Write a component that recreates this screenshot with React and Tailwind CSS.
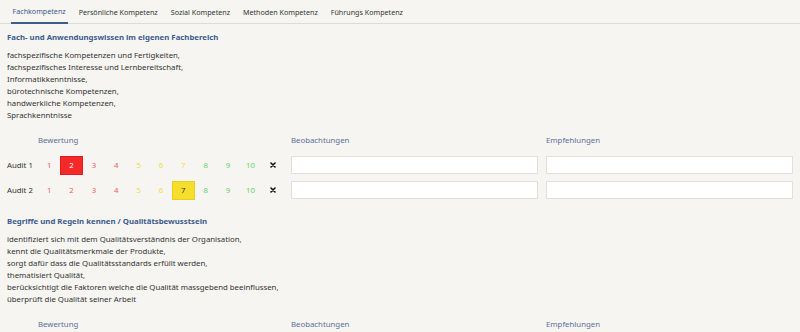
import React from 'react'

const tabs = ['Fachkompetenz', 'Persönliche Kompetenz', 'Sozial Kompetenz', 'Methoden Kompetenz', 'Führungs Kompetenz']

const sections = [
  {
    title: 'Fach- und Anwendungswissen im eigenen Fachbereich',
    lines: [
      'fachspezifische Kompetenzen und Fertigkeiten,',
      'fachspezifisches Interesse und Lernbereitschaft,',
      'Informatikkenntnisse,',
      'bürotechnische Kompetenzen,',
      'handwerkliche Kompetenzen,',
      'Sprachkenntnisse',
    ],
    audits: [2, 7],
  },
  {
    title: 'Begriffe und Regeln kennen / Qualitätsbewusstsein',
    lines: [
      'identifiziert sich mit dem Qualitätsverständnis der Organisation,',
      'kennt die Qualitätsmerkmale der Produkte,',
      'sorgt dafür dass die Qualitätsstandards erfüllt werden,',
      'thematisiert Qualität,',
      'berücksichtigt die Faktoren welche die Qualität massgebend beeinflussen,',
      'überprüft die Qualität seiner Arbeit',
    ],
    audits: [],
  },
]

function numColor(n) {
  if (n <= 4) return 'text-[#f25d5d]'
  if (n <= 7) return 'text-[#f2dc3e]'
  return 'text-[#66d266]'
}

function selectedClass(n) {
  if (n <= 4) return 'bg-[#f42a2a] text-white border border-[#e01c1c]'
  if (n <= 7) return 'bg-[#f6de2c] text-[#333] border border-[#eccf1c]'
  return 'bg-[#4cc44c] text-white'
}

function AuditRow({ label, value }) {
  return (
    <div className="flex items-center h-[18px]">
      <div className="w-[31px] text-[#333]">{label}</div>
      <div className="flex w-[246px] items-center">
        {[1, 2, 3, 4, 5, 6, 7, 8, 9, 10].map(n => (
          <div
            key={n}
            className={`w-[22.4px] h-[19px] flex items-center justify-center ${n === value ? selectedClass(n) : numColor(n)}`}
          >
            {n}
          </div>
        ))}
        <div className="w-[22.4px] flex items-center justify-center">
          <svg width="6" height="6" viewBox="0 0 6 6">
            <path d="M1 1 L5 5 M5 1 L1 5" stroke="#111" strokeWidth="1.6" strokeLinecap="round" />
          </svg>
        </div>
      </div>
      <div className="ml-[7px] flex-1 h-[18px] bg-white border border-[#e2e0db]" />
      <div className="ml-[8px] flex-1 h-[18px] bg-white border border-[#e2e0db]" />
    </div>
  )
}

export default function App() {
  return (
    <div
      className="w-[800px] h-[332px] overflow-hidden bg-[#f6f5f1] text-[7.8px] leading-[12px] text-[#333]"
      style={{ fontFamily: '"Noto Sans", "Open Sans", sans-serif' }}
    >
      {/* Tabs */}
      <div className="flex h-[24px] border-b border-[#dddbd6] pl-[10.5px] gap-[9px] text-[7.15px]">
        {tabs.map((t, i) => (
          <div
            key={t}
            className={`px-[2px] flex items-center h-[24px] ${i === 0 ? 'text-[#3c5b8e] border-b-2 border-[#3c5b8e]' : 'text-[#333]'}`}
          >
            {t}
          </div>
        ))}
      </div>

      <div className="px-[7px]">
        {sections.map((s, si) => (
          <div key={si} className={si === 0 ? 'pt-[7px]' : 'pt-[16px]'}>
            <h3 className="font-bold text-[#3c5b8e]">{s.title}</h3>
            <div className="mt-[6px]">
              {s.lines.map(l => (
                <div key={l}>{l}</div>
              ))}
            </div>
            <div className="flex mt-[13px] text-[#5b6f98]">
              <div className="w-[31px]" />
              <div className="w-[246px]">Bewertung</div>
              <div className="ml-[7px] flex-1">Beobachtungen</div>
              <div className="ml-[8px] flex-1">Empfehlungen</div>
            </div>
            {s.audits.length > 0 && (
              <div className="mt-[10px] flex flex-col gap-[7px]">
                {s.audits.map((v, ai) => (
                  <AuditRow key={ai} label={`Audit ${ai + 1}`} value={v} />
                ))}
              </div>
            )}
          </div>
        ))}
      </div>
    </div>
  )
}
